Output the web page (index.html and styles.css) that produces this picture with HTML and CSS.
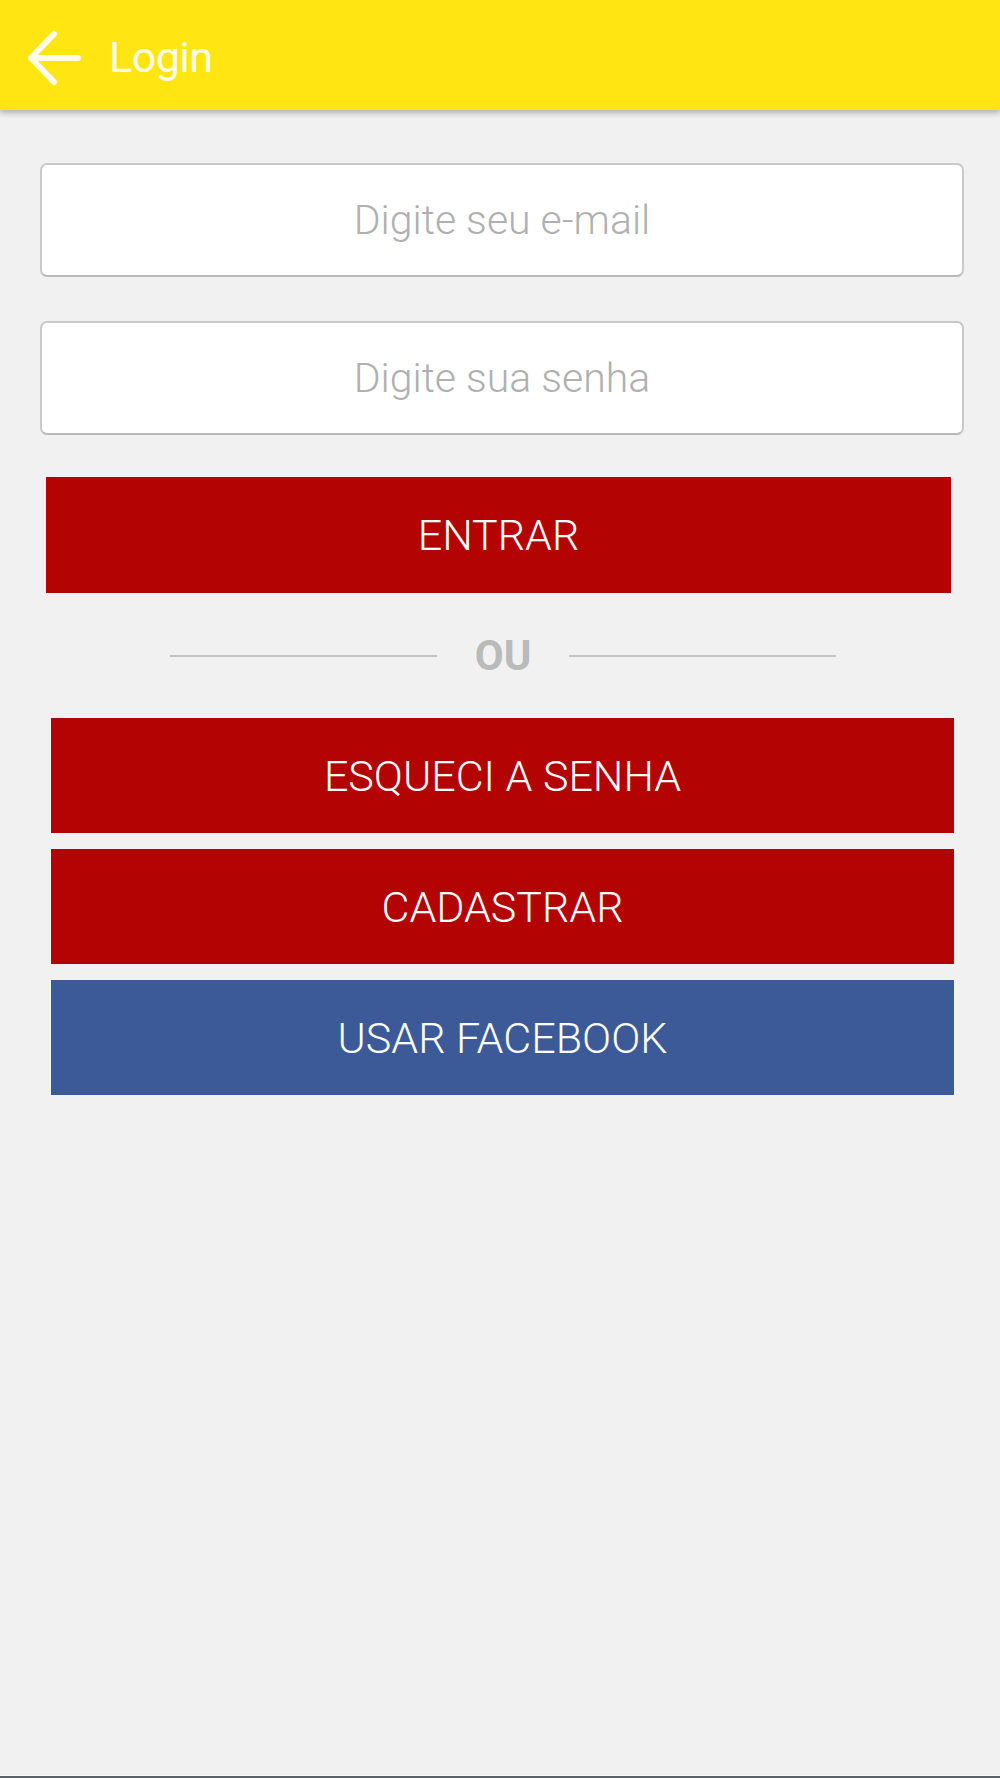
FILE: index.html
```html
<!DOCTYPE html>
<html lang="pt">
<head>
    <meta charset="UTF-8">
    <title>Login</title>
    <link rel="stylesheet" href="styles.css">
</head>
<body>
<div id="page">
    <div id="header">
        <span class="back">
            <svg width="54" height="56" viewBox="0 0 54 56">
                <path d="M27 4 L4 28 L27 52 M4 28 L51 28" fill="none" stroke="#fffbe6" stroke-width="6" stroke-linecap="round" stroke-linejoin="round"/>
            </svg>
        </span>
        <span class="title">Login</span>
    </div>
    <div id="content">
        <input class="field" type="email" placeholder="Digite seu e-mail">
        <input class="field" type="password" placeholder="Digite sua senha">
        <button class="btn red entrar">ENTRAR</button>
        <div class="ou">
            <span class="line"></span>
            <span class="ou-text">OU</span>
            <span class="line"></span>
        </div>
        <div class="actions">
            <button class="btn red">ESQUECI A SENHA</button>
            <button class="btn red">CADASTRAR</button>
            <button class="btn blue">USAR FACEBOOK</button>
        </div>
    </div>
    <div id="bottom"></div>
</div>
</body>
</html>
```

FILE: styles.css
```css
*{
    margin: 0;
    padding: 0;
    box-sizing: border-box;
}
body{
    background: #f1f1f1;
    font-family: Roboto, "Liberation Sans", sans-serif;
}
#page{
    height: 1778px;
    display: flex;
    flex-direction: column;
}
#header{
    height: 110px;
    background: #ffe612;
    box-shadow: 0 3px 6px rgba(0, 0, 0, 0.28);
    display: flex;
    align-items: center;
    padding: 6px 0 0 27px;
    position: relative;
    z-index: 1;
}
#header .back{
    display: flex;
}
#header .title{
    color: #fffbe6;
    font-size: 43px;
    margin-left: 28px;
    margin-top: -2px;
    letter-spacing: -0.5px;
}
#content{
    padding: 53px 36px 0 40px;
    display: flex;
    flex-direction: column;
}
.field{
    height: 114px;
    width: 924px;
    border: 2px solid #c9c9c9;
    border-bottom-color: #b9b9b9;
    border-radius: 7px;
    background: #fff;
    font-family: Roboto, "Liberation Sans", sans-serif;
    font-size: 41px;
    font-weight: 300;
    text-align: center;
    margin-bottom: 44px;
    outline: none;
}
.field::placeholder{
    color: #b0b0b0;
}
.field + .field{
    margin-bottom: 42px;
}
.btn{
    height: 116px;
    border: none;
    color: #fff;
    font-family: Roboto, "Liberation Sans", sans-serif;
    font-size: 43px;
    font-weight: 300;
    display: block;
}
.red{
    background: #b30303;
}
.blue{
    background: #3d5a98;
}
.entrar{
    width: 905px;
    margin-left: 6px;
}
.ou{
    height: 125px;
    display: flex;
    align-items: center;
    justify-content: center;
    gap: 38px;
    margin-left: 2px;
}
.ou .line{
    width: 267px;
    height: 2px;
    background: #c3c3c3;
}
.ou-text{
    color: #bababa;
    font-weight: bold;
    font-size: 42px;
}
.actions{
    display: flex;
    flex-direction: column;
    gap: 16px;
    padding-left: 11px;
}
.actions .btn{
    width: 903px;
    height: 115px;
}
#bottom{
    margin-top: auto;
    height: 3px;
    background: #5b6268;
    border-top: 1px solid #f7f9fc;
}
```
